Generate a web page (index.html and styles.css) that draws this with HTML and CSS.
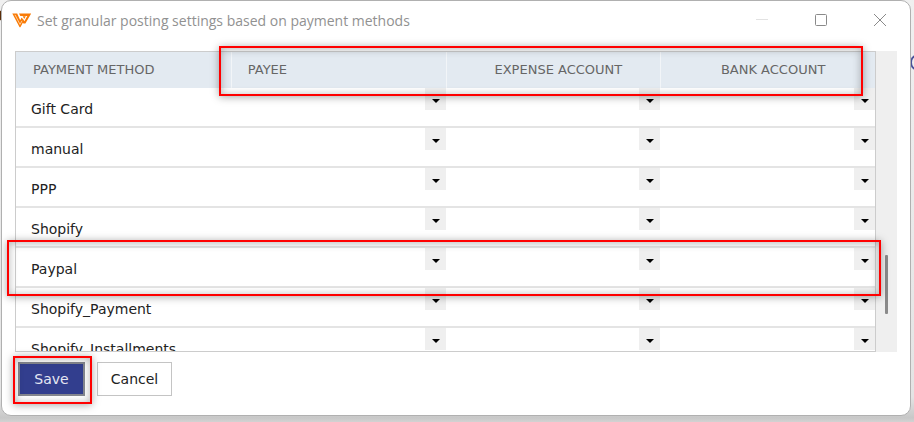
FILE: index.html
```html
<!DOCTYPE html>
<html lang="en">
<head>
    <meta charset="UTF-8">
    <meta name="viewport" content="width=device-width, initial-scale=1.0">
    <title>Set granular posting settings</title>
    <link rel="stylesheet" href="styles.css">
</head>
<body>
    <div class="behind-left"></div>
    <div class="behind-right"></div>

    <div class="window">
        <div class="titlebar">
            <svg class="logo" width="20" height="15" viewBox="0 0 20 15">
                <path d="M0.3 0.5H5.2L8.2 7.2L9.6 4.6L11.6 8.2L8.4 14.2H7.6Z" fill="#f97b06"/>
                <path d="M7 0.5H19.2L13.4 10.6H11.4L9.6 7.2L10.6 5.2L12.4 8.2L15.3 3H8.3Z" fill="#f97b06"/>
                <path d="M3 1.8L8 11.4L10 7.8" fill="none" stroke="#fff" stroke-width="0.6"/>
                <path d="M10.6 3.2H13.8L12.3 6Z" fill="#f97b06"/>
            </svg>
            <span class="title">Set granular posting settings based on payment methods</span>
            <button class="win-btn" aria-label="Minimize" disabled>
                <svg width="12" height="12" viewBox="0 0 12 12"><path d="M0 5.5H12" stroke="#e2e2e2"/></svg>
            </button>
            <button class="win-btn" aria-label="Maximize">
                <svg width="12" height="12" viewBox="0 0 12 12"><rect x="0.5" y="0.5" width="11" height="11" rx="1" fill="none" stroke="#8a8a8a"/></svg>
            </button>
            <button class="win-btn" aria-label="Close">
                <svg width="12" height="12" viewBox="0 0 12 12"><path d="M0 0L12 12M12 0L0 12" stroke="#8a8a8a"/></svg>
            </button>
        </div>

        <div class="content">
            <div class="grid">
                <table>
                    <thead>
                        <tr>
                            <th class="left">PAYMENT METHOD</th>
                            <th class="left">PAYEE</th>
                            <th>EXPENSE ACCOUNT</th>
                            <th>BANK ACCOUNT</th>
                        </tr>
                    </thead>
                    <tbody id="methods"></tbody>
                </table>
            </div>
            <div class="scrollbar"><div class="thumb"></div></div>
            <div class="mark mark-header"></div>
            <div class="mark mark-row"></div>
        </div>

        <div class="footer">
            <div class="save-wrap">
                <button class="save">Save</button>
                <div class="mark mark-save"></div>
            </div>
            <button class="cancel">Cancel</button>
        </div>
    </div>

    <script>
        const methods = ['Gift Card', 'manual', 'PPP', 'Shopify', 'Paypal', 'Shopify_Payment', 'Shopify_Installments'];
        const fields = ['Payee', 'Expense account', 'Bank account'];

        const body = document.getElementById('methods');
        methods.forEach(function(method) {
            const row = document.createElement('tr');
            let html = `<td class="name">${method}</td>`;
            fields.forEach(function(field) {
                html += `<td><label class="drop"><select aria-label="${field} for ${method}"><option></option></select></label></td>`;
            });
            row.innerHTML = html;
            body.appendChild(row);
        });
    </script>
</body>
</html>
```
FILE: styles.css
```css
* {
    box-sizing: border-box;
}

body {
    margin: 0;
    height: 100vh;
    padding: 0 3px 6px 1px;
    overflow: hidden;
    background: linear-gradient(#f0f0f0, #e4e4e4 94%, #c8c8c8 99%, #d2d2d2);
    font-family: "DejaVu Sans", Verdana, sans-serif;
    font-size: 14px;
    color: #222;
}

/* bits of the page under the dialog */
.behind-left {
    position: absolute;
    left: -8px;
    top: 10px;
    width: 11px;
    height: 11px;
    border-radius: 50%;
    background: #5a2c08;
}

.behind-right {
    position: absolute;
    right: -8px;
    top: 55px;
    width: 12px;
    height: 15px;
    border: 2px solid #4a529a;
    border-radius: 50%;
}

.window {
    position: relative;
    display: flex;
    flex-direction: column;
    height: 100%;
    background: #fff;
    border: 1px solid #b0b0b0;
    border-radius: 10px;
    overflow: hidden;
}

.titlebar {
    display: flex;
    align-items: center;
    flex: none;
    height: 38px;
    padding-left: 10px;
    padding-right: 1px;
}

.logo {
    margin-right: 5px;
}

.title {
    flex: 1;
    font-family: "Open Sans", sans-serif;
    font-size: 14px;
    color: #919191;
    white-space: nowrap;
}

.win-btn {
    display: flex;
    align-items: center;
    justify-content: center;
    width: 59px;
    height: 38px;
    padding: 0;
    border: none;
    background: none;
}

.content {
    position: relative;
    display: flex;
    flex: 1;
    min-height: 0;
    margin: 12px 13px 0;
}

.grid {
    flex: 1;
    overflow: hidden;
    border: 1px solid #ccc;
}

table {
    width: 100%;
    table-layout: fixed;
    border-collapse: separate;
    border-spacing: 0;
}

th {
    height: 36px;
    padding: 0 0 2px 10px;
    background: #e3eaf1;
    border-left: 1px solid #f2f5f8;
    font-size: 13px;
    font-weight: normal;
    color: #666;
    white-space: nowrap;
}

th.left {
    padding-left: 16px;
    text-align: left;
}

th:first-child {
    border-left-color: #e3eaf1;
}

td {
    height: 40px;
    padding: 0;
    border-bottom: 2px solid #e4e4e4;
    vertical-align: top;
}

td.name {
    padding: 4px 0 0 15px;
    vertical-align: middle;
    white-space: nowrap;
}

.drop {
    position: relative;
    display: block;
    height: 22px;
}

.drop::after {
    content: "";
    position: absolute;
    right: 6px;
    top: 11px;
    border: 4px solid transparent;
    border-top-color: #000;
    border-bottom: none;
    pointer-events: none;
}

select {
    display: block;
    width: 100%;
    height: 22px;
    padding: 0;
    border: none;
    border-radius: 0;
    appearance: none;
    background: linear-gradient(#efefef, #efefef) right / 21px 100% no-repeat #fff;
}

.scrollbar {
    width: 21px;
    background: #efefef;
}

.thumb {
    width: 3px;
    height: 59px;
    margin: 204px auto 0;
    border-radius: 1px;
    background: #8a8a8a;
}

.footer {
    display: flex;
    flex: none;
    gap: 12px;
    padding: 10px 16px 19px;
}

.save-wrap {
    position: relative;
}

.save,
.cancel {
    display: block;
    height: 34px;
    padding: 0;
    font-family: inherit;
    font-size: 14px;
}

.save {
    width: 67px;
    border: 2px solid #85878f;
    background: #323e8e;
    color: #e4e6f2;
}

.cancel {
    width: 75px;
    border: 1px solid #c4c4c4;
    background: #fff;
    color: #222;
}

/* red callouts */
.mark {
    position: absolute;
    border: 2px solid #f00;
    box-shadow: 0 1px 8px rgba(0, 0, 0, 0.35), inset 0 1px 8px rgba(0, 0, 0, 0.3);
    pointer-events: none;
}

.mark-header {
    left: 204px;
    right: 34px;
    top: -5px;
    height: 50px;
}

.mark-row {
    left: -8px;
    right: 16px;
    top: 189px;
    height: 56px;
}

.mark-save {
    left: -5px;
    right: -7px;
    top: -6px;
    bottom: -8px;
}
```
